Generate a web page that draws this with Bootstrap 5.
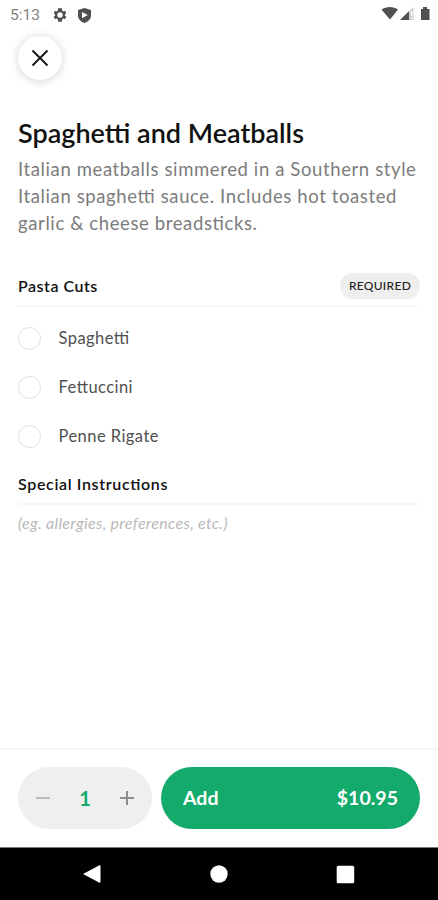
<!DOCTYPE html>
<html lang="en">
<head>
<meta charset="utf-8">
<meta name="viewport" content="width=device-width, initial-scale=1">
<title>Spaghetti and Meatballs</title>
<link href="https://cdn.jsdelivr.net/npm/bootstrap@5.3.0/dist/css/bootstrap.min.css" rel="stylesheet">
<style>
body{font-family:Lato,"Liberation Sans",sans-serif;font-feature-settings:"liga" 1;background:#fff;color:#111}
.screen{width:438px;height:900px;overflow:hidden}
.status{height:36px;padding:5px 7px 0 10px;font:15.5px/20px Roboto,sans-serif;color:#808080}
.status svg{fill:#505050;display:block}
.gear{margin-left:12px}
.shield{margin-left:9px}
.close-btn{width:44px;height:44px;margin-left:18px;border:0;background:#fff;box-shadow:0 1px 10px rgba(0,0,0,.18)}
.details{padding:0 18px}
.dish{font-size:27px;line-height:34px;font-weight:600;margin-top:36px}
.desc{font-size:18.5px;line-height:27px;color:#7c7c7c;letter-spacing:.61px;margin-top:6px;white-space:nowrap}
.section-head{font-size:16px;line-height:20px;font-weight:600;letter-spacing:.5px;border-bottom:2px solid #f8f8f8}
.cuts{height:34px;margin-top:36px}
.cuts-title{padding-top:3px}
.req{background:#eee;color:#222;font-size:12px;line-height:26px;height:26px;width:80px;padding:0;font-weight:500;letter-spacing:.3px}
.option{height:49px;font-size:16.5px;letter-spacing:.45px;color:#505050}
.option .form-check-input{width:23px;height:23px;margin:0 17.500px 0 0;border:1.5px solid #dedede;background:#fff}
.options{padding-top:7px}
.special{height:31px;margin-top:13px;letter-spacing:.65px}
.note{font-size:16px;line-height:24px;margin-top:6px;color:#b9b9b9;font-style:italic;letter-spacing:.3px}
.order{height:99px;border-top:2px solid #f5f5f5;padding:17px 18px 0}
.stepper{width:134px;height:62px;background:#efefef;padding:0 17px}
.stepper button{width:16px;height:24px}
.qty{font-size:20px;color:#14aa6c}
.add{width:259px;height:62px;background:#14aa6c!important;color:#fff!important;font-size:19.5px;padding:0 22px;border:0}
.sysnav{height:53px;background:#000;border-top:1px solid #777;padding:0 83px 0 82px}
</style>
<script src="https://cdn.jsdelivr.net/npm/bootstrap@5.3.0/dist/js/bootstrap.bundle.min.js"></script>
</head>
<body>
<div class="screen d-flex flex-column">
  <header class="status d-flex justify-content-between align-items-start">
    <div class="d-flex align-items-center"><span>5:13</span>
      <svg class="gear" width="16" height="18" viewBox="0 0 24 24"><path fill-rule="evenodd" d="M19.400 13a7 7 0 0 0 0-2l2.100-1.700-2-3.500-2.500 1a8 8 0 0 0-1.700-1L14.900 2h-5.800l-.4 3.800a8 8 0 0 0-1.700 1l-2.500-1-2 3.500L4.600 11a7 7 0 0 0 0 2l-2.100 1.700 2 3.500 2.500-1a8 8 0 0 0 1.700 1l.4 3.800h5.800l.4-3.800a8 8 0 0 0 1.700-1l2.500 1 2-3.500zM12 16a4 4 0 1 1 0-8 4 4 0 0 1 0 8z"/></svg>
      <svg class="shield" width="15" height="17" viewBox="0 0 15 17"><path fill-rule="evenodd" d="M7.500 1 14 3v5.500c0 3.500-2.700 6-6.500 7.500C3.700 14.500 1 12 1 8.500V3zM5 5v6.200L10.800 8.100z"/></svg>
    </div>
    <svg width="50" height="19" viewBox="0 1 50 19"><path d="M.5 5.500C5 2 12.500 2 17 5.500L9 15.500z"/><path d="M32.500 3v13H19z" fill="#ccc"/><path d="M28 7.300V16h-9z"/><path d="M30 7h1.500v5H30zM30 13.500h1.500V15H30z" fill="#fff"/><path d="M40 5h2V3h4v2h2.500v11H40z"/></svg>
  </header>
  <button class="close-btn rounded-circle p-0 d-flex align-items-center justify-content-center flex-shrink-0" aria-label="Close"><svg width="18" height="18" viewBox="0 0 18 18" fill="none" stroke="#151515" stroke-width="1.900"><path d="M1.500 1.500 16.500 16.500M16.500 1.500 1.500 16.500"/></svg></button>
  <main class="details flex-grow-1">
    <h1 class="dish mb-0">Spaghetti and Meatballs</h1>
    <p class="desc mb-0">Italian meatballs simmered in a Southern style<br>Italian spaghetti sauce. Includes hot toasted<br>garlic &amp; cheese breadsticks.</p>
    <div class="section-head cuts d-flex justify-content-between align-items-start"><span class="cuts-title">Pasta Cuts</span><span class="req badge rounded-pill">REQUIRED</span></div>
    <div class="options">
      <label class="option d-flex align-items-center"><input class="form-check-input" type="radio" name="cut"><span>Spaghetti</span></label>
      <label class="option d-flex align-items-center"><input class="form-check-input" type="radio" name="cut"><span>Fettuccini</span></label>
      <label class="option d-flex align-items-center"><input class="form-check-input" type="radio" name="cut"><span>Penne Rigate</span></label>
    </div>
    <h2 class="section-head special mb-0">Special Instructions</h2>
    <p class="note mb-0">(eg. allergies, preferences, etc.)</p>
  </main>
  <footer class="order d-flex justify-content-between align-items-start flex-shrink-0">
    <div class="stepper rounded-pill d-flex align-items-center justify-content-between">
      <button class="btn p-0 border-0 d-flex align-items-center" aria-label="Decrease"><svg width="16" height="16" stroke="#bbb" stroke-width="2"><path d="M1 8h14"/></svg></button>
      <span class="qty fw-bold">1</span>
      <button class="btn p-0 border-0 d-flex align-items-center" aria-label="Increase"><svg width="16" height="16" stroke="#8d8d8d" stroke-width="2"><path d="M1 8h14M8 1v14"/></svg></button>
    </div>
    <button class="add btn rounded-pill fw-bold d-flex justify-content-between align-items-center"><span>Add</span><span>$10.95</span></button>
  </footer>
  <nav class="sysnav d-flex justify-content-between align-items-center flex-shrink-0">
    <svg width="19" height="20" fill="#fff"><path d="M1 10 17.500 1.200Q18.500 1 18.500 2v16q0 1-1 .8z"/></svg>
    <svg width="18" height="18" fill="#fff"><circle cx="9" cy="9" r="8.700"/></svg>
    <svg width="19" height="19" fill="#fff"><rect x=".7" y=".7" width="17.500" height="17.500" rx="1.500"/></svg>
  </nav>
</div>
</body>
</html>
